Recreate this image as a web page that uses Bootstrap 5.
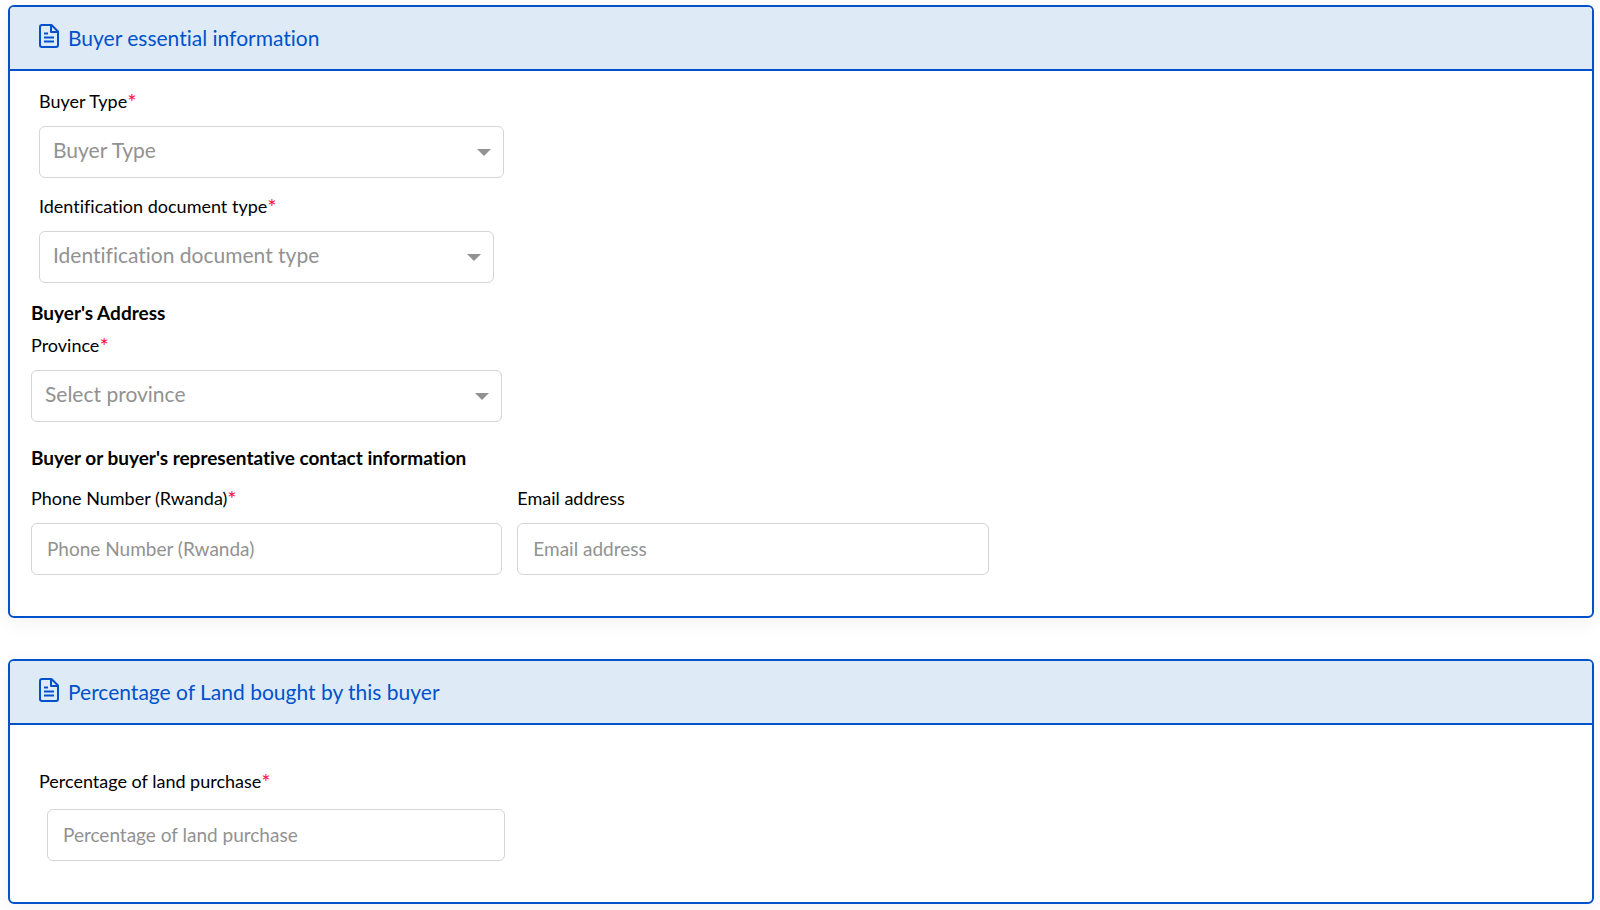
<!DOCTYPE html>
<html lang="en">
<head>
<meta charset="utf-8">
<meta name="viewport" content="width=device-width, initial-scale=1">
<title>Buyer information</title>
<link href="https://cdn.jsdelivr.net/npm/bootstrap@5.3.0/dist/css/bootstrap.min.css" rel="stylesheet">
<style>
  body { font-family: Lato, "Open Sans", sans-serif; font-size: 18px; line-height: 24px; color: #000; background: #fff; font-variant-ligatures: none; }
  .page { padding: 5px 6px 7px 8px; gap: 41px; }
  .panel { border: 2px solid #0052cc; border-radius: 6px; box-shadow: 0 4px 20px rgba(0, 0, 0, .06); }
  .panel > .card-header { background: #deebf7; border-bottom: 2px solid #0052cc; padding: 17px 28px; color: #0052cc; border-radius: 4px 4px 0 0; }
  .panel > .card-body { padding: 18px 21px 41px; }
  .panel > .percent-body { padding-top: 44px; }
  .panel-title { font-size: 21px; line-height: 28px; font-weight: 400; }
  .form-label { margin-bottom: 13px; }
  .percent-body .form-label { margin-bottom: 16px; }
  .req { color: #ff1040; font-size: 22px; line-height: 1px; vertical-align: -2px; }
  .field-grid { display: grid; grid-template-columns: repeat(3, minmax(0, 1fr)); gap: 15px; max-width: 1444px; }
  .field-title { font-size: 19px; line-height: 24px; font-weight: 700; }
  .address-title { margin-top: 18px; }
  .form-control, .form-select { height: 52px; border: 1px solid #d4d4d8; border-radius: 6px; color: #929292; font-variant-ligatures: none; }
  .form-control { padding: 0 15px 2px; font-size: 19px; }
  .form-control::placeholder { color: #929292; opacity: 1; }
  .form-select { padding: 0 36px 4px 13px; font-size: 21px; background-size: 14px 7px; background-position: right 12px center;
    background-image: url("data:image/svg+xml,%3Csvg xmlns='http://www.w3.org/2000/svg' viewBox='0 0 14 7'%3E%3Cpath d='M0 0h14L7 7z' fill='%23929292'/%3E%3C/svg%3E"); }
  .buyer-field { max-width: 465px; }
  .percent-field { max-width: 466px; }
</style>
</head>
<body>
<main class="page d-flex flex-column">
  <section class="card panel">
    <header class="card-header d-flex gap-2">
      <svg width="22" height="24" viewBox="-1 0 22 24" fill="none" stroke="#0052cc" stroke-width="2" stroke-linejoin="round" aria-hidden="true"><path d="M3 1h9.500l6.500 6.500V21a2 2 0 0 1-2 2H3a2 2 0 0 1-2-2V3a2 2 0 0 1 2-2z"/><path d="M12 1v7h7M5 9.500h4M5 13.500h10M5 17.500h10"/></svg>
      <h1 class="panel-title mb-0">Buyer essential information</h1>
    </header>
    <div class="card-body">
      <div class="buyer-field ms-2 mb-3">
        <label class="form-label d-block" for="buyerType">Buyer Type<span class="req">*</span></label>
        <select class="form-select" id="buyerType"><option>Buyer Type</option></select>
      </div>
      <div class="field-grid">
        <div class="px-2">
          <label class="form-label d-block" for="docType">Identification document type<span class="req">*</span></label>
          <select class="form-select" id="docType"><option>Identification document type</option></select>
        </div>
      </div>
      <h2 class="field-title address-title mb-2">Buyer's Address</h2>
      <div class="field-grid">
        <div>
          <label class="form-label d-block" for="province">Province<span class="req">*</span></label>
          <select class="form-select" id="province"><option>Select province</option></select>
        </div>
      </div>
      <h2 class="field-title mt-4 mb-3">Buyer or buyer's representative contact information</h2>
      <div class="field-grid">
        <div>
          <label class="form-label d-block" for="phone">Phone Number (Rwanda)<span class="req">*</span></label>
          <input class="form-control" id="phone" type="tel" placeholder="Phone Number (Rwanda)">
        </div>
        <div>
          <label class="form-label d-block" for="email">Email address</label>
          <input class="form-control" id="email" type="email" placeholder="Email address">
        </div>
      </div>
    </div>
  </section>
  <section class="card panel">
    <header class="card-header d-flex gap-2">
      <svg width="22" height="24" viewBox="-1 0 22 24" fill="none" stroke="#0052cc" stroke-width="2" stroke-linejoin="round" aria-hidden="true"><path d="M3 1h9.500l6.500 6.500V21a2 2 0 0 1-2 2H3a2 2 0 0 1-2-2V3a2 2 0 0 1 2-2z"/><path d="M12 1v7h7M5 9.500h4M5 13.500h10M5 17.500h10"/></svg>
      <h1 class="panel-title mb-0">Percentage of Land bought by this buyer</h1>
    </header>
    <div class="card-body percent-body">
      <div class="percent-field ms-2">
        <label class="form-label d-block" for="percent">Percentage of land purchase<span class="req">*</span></label>
        <div class="ps-2"><input class="form-control" id="percent" type="text" placeholder="Percentage of land purchase"></div>
      </div>
    </div>
  </section>
</main>
<script src="https://cdn.jsdelivr.net/npm/bootstrap@5.3.0/dist/js/bootstrap.bundle.min.js"></script>
</body>
</html>
